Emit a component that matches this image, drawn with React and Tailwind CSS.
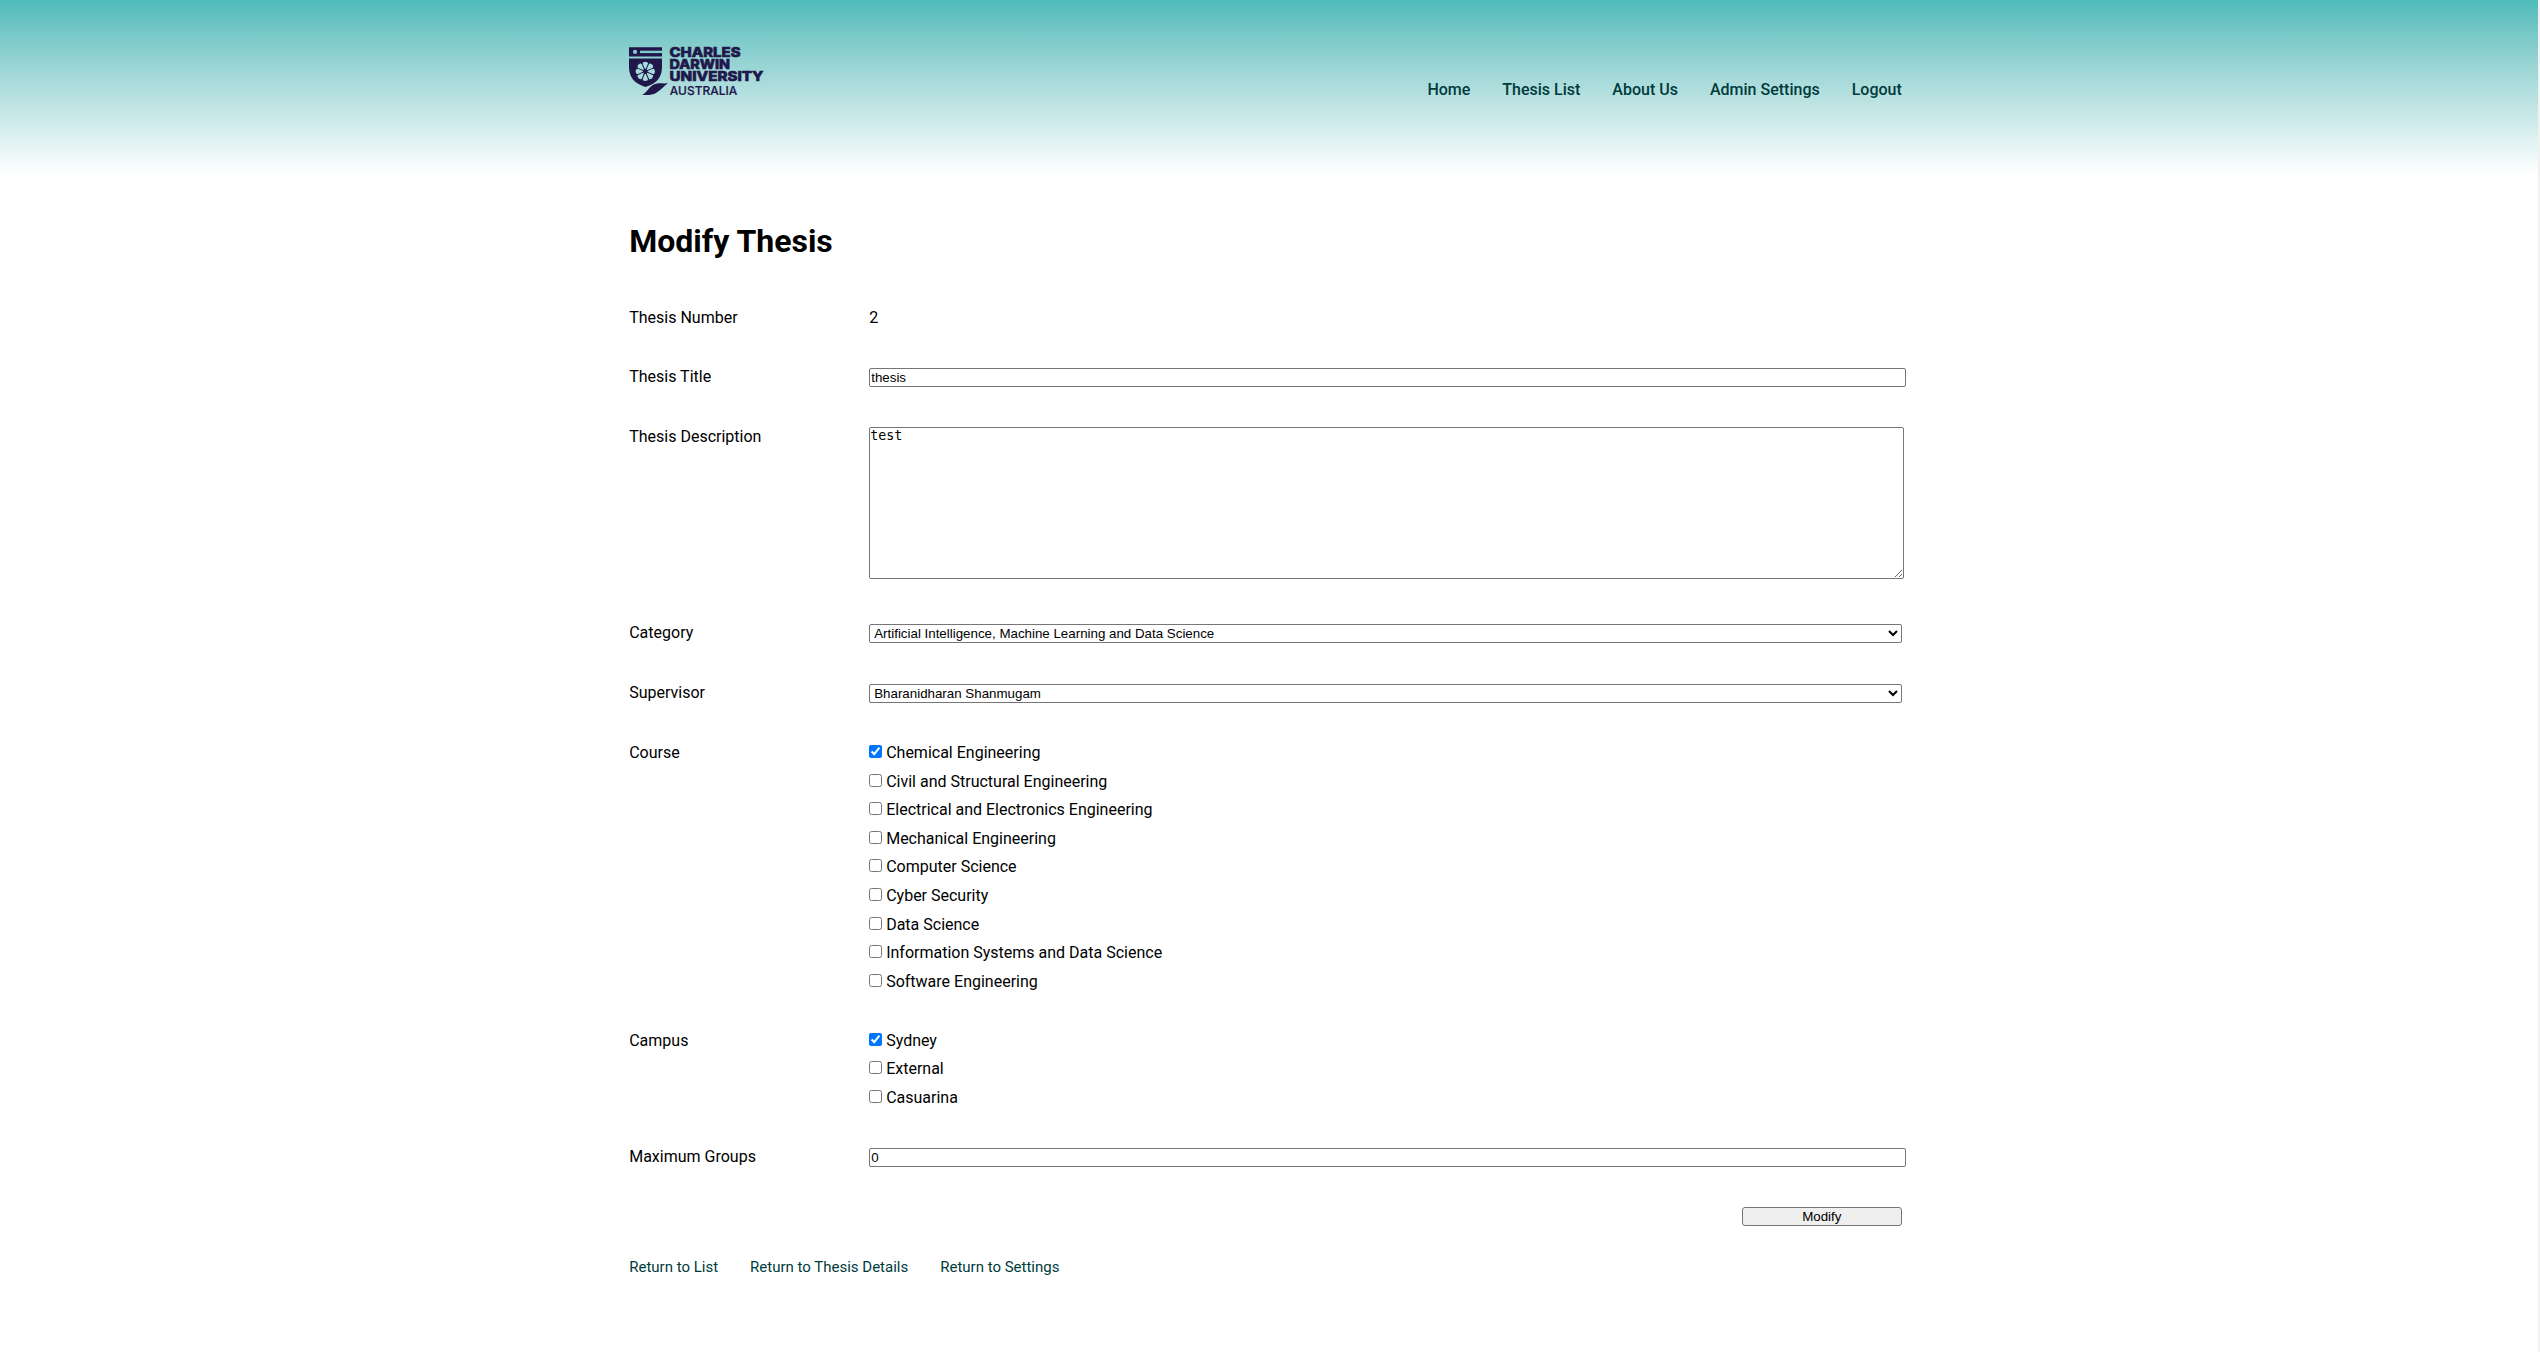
const navLinks = ['Home', 'Thesis List', 'About Us', 'Admin Settings', 'Logout'];
const footerLinks = ['Return to List', 'Return to Thesis Details', 'Return to Settings'];
const courses = [
  'Chemical Engineering',
  'Civil and Structural Engineering',
  'Electrical and Electronics Engineering',
  'Mechanical Engineering',
  'Computer Science',
  'Cyber Security',
  'Data Science',
  'Information Systems and Data Science',
  'Software Engineering',
];
const campuses = ['Sydney', 'External', 'Casuarina'];

const fieldClass =
  'block border border-[#767676] rounded-[2px] bg-white text-black text-[13.333px] leading-[15px] font-["Liberation_Sans",sans-serif]';

function Logo() {
  const petals = [0, 45, 90, 135, 180, 225, 270, 315];
  return (
    <svg width="140" height="50" viewBox="0 0 140 50" fill="#21174a" className="block overflow-visible">
      <path d="M0 0.300H33V9.500H0Z" />
      <path d="M11 4.900H33" stroke="#7fcccc" strokeWidth="2.400" />
      <circle cx="6" cy="4.900" r="2.100" fill="#7fcccc" />
      <path d="M0 11.500H33V20C33 30 28 36.500 16.500 40C5 36.500 0 30 0 20Z" />
      <g fill="#a5dcdc">
        {petals.map((a) => (
          <path
            key={a}
            d="M16.300 22.300C14.500 21 13.300 18.500 13.400 17C13.500 15.600 14.800 14.800 16.300 14.800C17.800 14.800 19.100 15.600 19.200 17C19.300 18.500 18.100 21 16.300 22.300Z"
            transform={`rotate(${a} 16.3 24.4)`}
          />
        ))}
      </g>
      <g stroke="#21174a" strokeWidth="1">
        {petals.map((a) => (
          <path key={a} d="M16.300 24.400V14.500" transform={`rotate(${a + 22.5} 16.3 24.4)`} />
        ))}
      </g>
      <path d="M13 47.500C19 46 20 37.500 28 36.500C32 35.800 35 37 39 36C35 39 32 43 27 46C23 48.200 17 48.500 13 47.500Z" />
      <g className='font-["Inter",sans-serif] font-extrabold text-[13.4px]' stroke="#21174a" strokeWidth="0.6">
        <text x="40.500" y="10.400" textLength="71" lengthAdjust="spacingAndGlyphs">CHARLES</text>
        <text x="40.500" y="22.400" textLength="60.500" lengthAdjust="spacingAndGlyphs">DARWIN</text>
        <text x="40.500" y="34.400" textLength="94" lengthAdjust="spacingAndGlyphs">UNIVERSITY</text>
      </g>
      <text x="40.800" y="47.500" textLength="67.500" lengthAdjust="spacingAndGlyphs" stroke="#21174a" strokeWidth="0.2" className='font-["Inter",sans-serif] font-medium text-[12px]'>
        AUSTRALIA
      </text>
    </svg>
  );
}

function Row({ label, height, children }) {
  return (
    <div className={`flex ${height}`}>
      <div className="w-60 shrink-0">{label}</div>
      <div className="w-[1032.6px] shrink-0">{children}</div>
    </div>
  );
}

function CheckList({ items }) {
  return items.map((item, i) => (
    <div key={item}>
      <label>
        <input type="checkbox" defaultChecked={i === 0} className="w-[13px] h-[13px] align-baseline" /> {item}
      </label>
    </div>
  ));
}

export default function App() {
  return (
    <div className='flex h-[1352px] overflow-hidden bg-white text-black text-base leading-[28.6px] font-["Roboto",sans-serif]'>
      <div className="flex-1">
        <header className="h-[175px] bg-linear-to-b from-[#4fbbbb] to-white">
          <div className="ml-[629.2px] w-[1272.6px] pt-[47px] flex justify-between">
            <Logo />
            <nav className="flex gap-8 pt-[29px] font-medium text-[#003b3c]">
              {navLinks.map((l) => (
                <a key={l} href="#">{l}</a>
              ))}
            </nav>
          </div>
        </header>
        <main className="ml-[629.2px] w-[1272.6px] pt-[47px]">
          <h1 className="text-[32px] font-bold leading-[38px] h-[81.7px]">Modify Thesis</h1>
          <Row label="Thesis Number" height="h-[59.5px]">2</Row>
          <Row label="Thesis Title" height="h-[59.5px]">
            <input defaultValue="thesis" className={`${fieldClass} mt-[5px] w-[1036.8px] h-[19px] p-px`} />
          </Row>
          <Row label="Thesis Description" height="h-[196.35px]">
            <textarea
              defaultValue="test"
              className='block mt-[4.5px] w-[1034.8px] h-[152px] border border-[#767676] rounded-[2px] bg-white text-[13.333px] leading-[15px] font-["DejaVu_Sans_Mono",monospace]'
            />
          </Row>
          <Row label="Category" height="h-[60px]">
            <select className={`${fieldClass} mt-[5px] w-full h-[19px]`}>
              <option>Artificial Intelligence, Machine Learning and Data Science</option>
            </select>
          </Row>
          <Row label="Supervisor" height="h-[60px]">
            <select className={`${fieldClass} mt-[5px] w-full h-[19px]`}>
              <option>Bharanidharan Shanmugam</option>
            </select>
          </Row>
          <Row label="Course" height="h-[287.7px]">
            <CheckList items={courses} />
          </Row>
          <Row label="Campus" height="h-[116.3px]">
            <CheckList items={campuses} />
          </Row>
          <Row label="Maximum Groups" height="h-[59.5px]">
            <input defaultValue="0" className={`${fieldClass} mt-[5px] w-[1036.8px] h-[19px] p-px`} />
          </Row>
          <div className="flex justify-end pt-[4.6px]">
            <button className='w-40 h-[19px] border border-[#767676] rounded-[3px] bg-[#efefef] text-[13.333px] leading-[15px] font-["Liberation_Sans",sans-serif]'>
              Modify
            </button>
          </div>
          <div className="flex gap-8 pt-[26.8px] text-[15px] text-[#003b3c]">
            {footerLinks.map((l) => (
              <a key={l} href="#">{l}</a>
            ))}
          </div>
        </main>
      </div>
      <div className="w-0.5 bg-[#f1f1f1]" />
    </div>
  );
}
